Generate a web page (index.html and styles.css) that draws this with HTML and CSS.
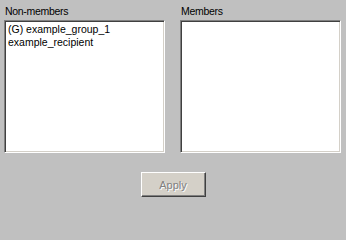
FILE: index.html
```html
<!DOCTYPE html>
<html>
<head>
<meta charset="utf-8">
<link rel="stylesheet" href="styles.css">
</head>
<body>
<div class="panel">
  <div class="lists">
    <div class="col">
      <div class="label">Non-members</div>
      <div class="listbox">
        <div class="item">(G) example_group_1</div>
        <div class="item">example_recipient</div>
      </div>
    </div>
    <div class="col">
      <div class="label">Members</div>
      <div class="listbox"></div>
    </div>
  </div>
  <div class="actions">
    <button class="btn" disabled>Apply</button>
  </div>
</div>
</body>
</html>
```
FILE: styles.css
```css
html, body {
  margin: 0;
  padding: 0;
  background: #c0c0c0;
}
body {
  width: 346px;
  height: 200px;
  font-family: "Liberation Sans", Arial, sans-serif;
  font-size: 10.5px;
  color: #000;
}
.panel {
  display: flex;
  flex-direction: column;
  padding: 0 0 0 4px;
}
.lists {
  display: flex;
  gap: 15px;
}
.col {
  display: flex;
  flex-direction: column;
  width: 161px;
}
.label {
  line-height: 13px;
  padding: 5px 0 0 1px;
  height: 15px;
  letter-spacing: -0.3px;
}
.listbox {
  box-sizing: border-box;
  height: 133px;
  background: #fff;
  border-style: solid;
  border-width: 1px;
  border-color: #808080 #fff #fff #808080;
  box-shadow: inset 1px 1px 0 #404040, inset -1px -1px 0 #d4d0c8;
  padding: 2px 3px;
}
.item {
  line-height: 13px;
  white-space: nowrap;
}
.actions {
  display: flex;
  justify-content: center;
  padding: 19px 4px 0 0;
}
.btn {
  box-sizing: border-box;
  width: 65px;
  height: 25px;
  margin: 0;
  padding: 0;
  background: #d4d0c8;
  border-style: solid;
  border-width: 1px;
  border-color: #fff #404040 #404040 #fff;
  box-shadow: inset -1px -1px 0 #808080;
  font-family: "Liberation Sans", Arial, sans-serif;
  font-size: 11px;
  color: #808080;
  text-shadow: 1px 1px 0 #fff;
}
```
